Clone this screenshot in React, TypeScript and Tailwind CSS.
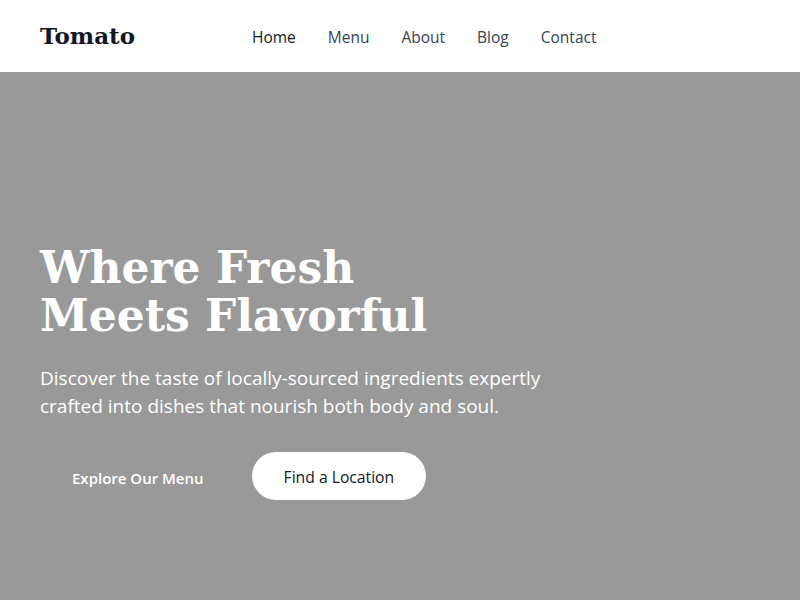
const links = ["Home", "Menu", "About", "Blog", "Contact"];

export default function App() {
  return (
    <div className="h-screen overflow-hidden bg-[#999999] font-['Open_Sans',sans-serif]">
      <header className="flex h-[72px] items-center bg-white px-10">
        <a href="#" className="w-[212px] font-['DejaVu_Serif',serif] text-[23px] font-bold text-gray-900">
          Tomato
        </a>
        <nav className="flex gap-8 pt-1 text-[15.5px] text-gray-700">
          {links.map((l, i) => (
            <a key={l} href="#" className={i === 0 ? "text-gray-900" : ""}>
              {l}
            </a>
          ))}
        </nav>
      </header>

      <section className="flex h-[600px] items-center px-10">
        <div>
          <h1 className="font-['DejaVu_Serif',serif] text-[44px] leading-[48px] font-bold text-white">
            Where Fresh
            <br />
            Meets Flavorful
          </h1>
          <p className="mt-6 max-w-[520px] text-[19px] leading-7 text-white">
            Discover the taste of locally-sourced ingredients expertly crafted
            into dishes that nourish both body and soul.
          </p>
          <div className="mt-8 flex gap-4">
            <a href="#" className="flex h-12 items-center rounded-full px-8 pt-1 text-[15px] font-semibold text-white">
              Explore Our Menu
            </a>
            <a href="#" className="flex h-12 items-center rounded-full bg-white px-8 pt-1 text-[15.7px] text-gray-900">
              Find a Location
            </a>
          </div>
        </div>
      </section>
    </div>
  );
}
